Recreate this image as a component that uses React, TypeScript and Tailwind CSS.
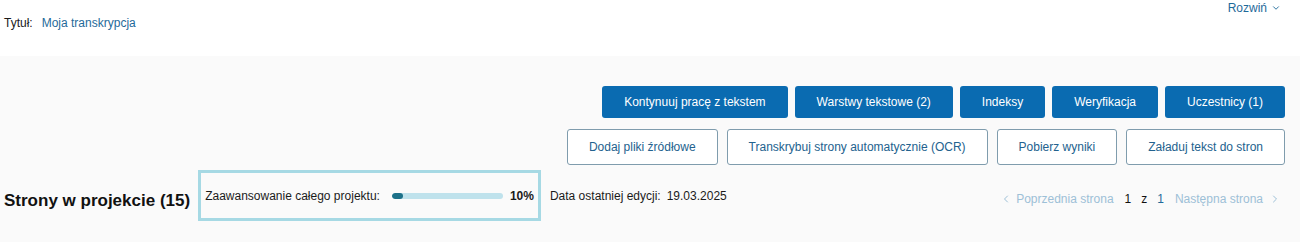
import React from "react";
import { ChevronDown, ChevronLeft, ChevronRight } from "lucide-react";

const font = { fontFamily: '"Liberation Sans", Arial, sans-serif' };

export default function App() {
  const primary = [
    "Kontynuuj pracę z tekstem",
    "Warstwy tekstowe (2)",
    "Indeksy",
    "Weryfikacja",
    "Uczestnicy (1)",
  ];
  const secondary = [
    "Dodaj pliki źródłowe",
    "Transkrybuj strony automatycznie (OCR)",
    "Pobierz wyniki",
    "Załaduj tekst do stron",
  ];
  return (
    <div className="w-[1300px] h-[242px] bg-white text-[12px] text-[#1a1a1a]" style={font}>
      <div className="h-[56px] flex justify-between">
        <div className="pl-[4px] pt-[15px] flex items-center gap-[9px] h-[30px]">
          <span>Tytuł:</span>
          <span className="text-[#1f6a9a]">Moja transkrypcja</span>
        </div>
        <div className="pr-[19px] pt-[1px] flex items-start">
          <button className="flex items-center gap-[4px] text-[#1f6a9a] h-[14px]">
            Rozwiń
            <ChevronDown size={10} strokeWidth={2.2} />
          </button>
        </div>
      </div>
      <div className="h-[186px] bg-[#fafafa] pt-[30px]">
        <div className="flex justify-end gap-[7px] pr-[15px]">
          {primary.map((t) => (
            <button
              key={t}
              className="h-[32px] px-[22px] rounded-[3px] bg-[#0a6bb1] text-white"
            >
              {t}
            </button>
          ))}
        </div>
        <div className="flex justify-end gap-[9px] pr-[15px] mt-[11px]">
          {secondary.map((t) => (
            <button
              key={t}
              className="h-[36px] px-[21px] rounded-[3px] border border-[#7f9cad] bg-white text-[#23628e]"
            >
              {t}
            </button>
          ))}
        </div>
        <div className="flex items-center mt-[5px] pr-[19px]">
          <h2 className="pl-[4px] text-[17px] font-bold text-[#111] mt-[10px]">
            Strony w projekcie (15)
          </h2>
          <div className="ml-[8px] h-[51px] border-[3px] border-[#a6d9e4] flex items-center pl-[4px] pr-[4px]">
            <span>Zaawansowanie całego projektu:</span>
            <div className="ml-[12px] w-[111px] h-[6px] rounded-full bg-[#bfe2ec] overflow-hidden">
              <div className="h-full w-[11px] rounded-full bg-[#1d7189]" />
            </div>
            <span className="ml-[7px] font-bold">10%</span>
          </div>
          <div className="ml-[9px] flex gap-[6px]">
            <span>Data ostatniej edycji:</span>
            <span>19.03.2025</span>
          </div>
          <div className="ml-auto flex items-center text-[#9dc0d7] mt-[6px]">
            <ChevronLeft size={12} strokeWidth={2} />
            <span className="ml-[4px]">Poprzednia strona</span>
            <span className="ml-[11px] text-[#111]">1</span>
            <span className="ml-[10px] text-[#111]">z</span>
            <span className="ml-[10px] text-[#1f6a9a]">1</span>
            <span className="ml-[11px]">Następna strona</span>
            <ChevronRight size={12} strokeWidth={2} className="ml-[6px]" />
          </div>
        </div>
      </div>
    </div>
  );
}
